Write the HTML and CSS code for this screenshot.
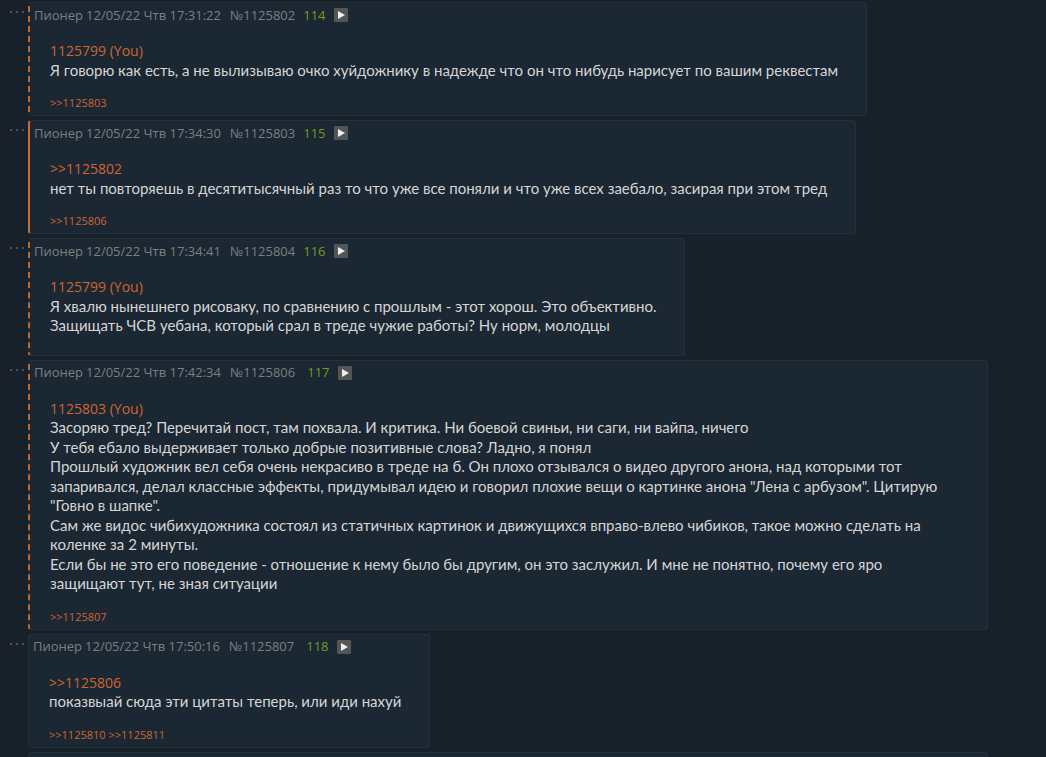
FILE: index.html
```
<!DOCTYPE html>
<html lang="ru">
  <head>
    <meta charset="UTF-8" />
    <meta name="viewport" content="width=device-width, initial-scale=1.0" />
    <title>Тред</title>
    <link rel="stylesheet" href="styles.css">
  </head>
  <body>
    <main class="thread">
      <div class="row">
        <button class="menu" aria-label="Меню поста"><svg viewBox="0 0 20 20"><path d="M2 9h2v2H2zM8 9h2v2H8zM14 9h2v2h-2z" /></svg></button>
        <article class="post reply-to-me">
          <header class="details">
            <span>Пионер</span>
            <time>12/05/22 Чтв 17:31:22</time>
            <a class="number" href="#1125802">№1125802</a>
            <span class="order">114</span>
            <button class="play" aria-label="Ответить"><svg viewBox="0 0 14 14"><path d="M4 3l7 4-7 4z" /></svg></button>
          </header>
          <div class="message">
            <a href="#1125799">1125799 (You)</a><br>
            Я говорю как есть, а не вылизываю очко хуйдожнику в надежде что он что нибудь нарисует по вашим реквестам
          </div>
          <footer class="refs"><a href="#1125803">&gt;&gt;1125803</a></footer>
        </article>
      </div>

      <div class="row">
        <button class="menu" aria-label="Меню поста"><svg viewBox="0 0 20 20"><path d="M2 9h2v2H2zM8 9h2v2H8zM14 9h2v2h-2z" /></svg></button>
        <article class="post mine" id="1125803">
          <header class="details">
            <span>Пионер</span>
            <time>12/05/22 Чтв 17:34:30</time>
            <a class="number" href="#1125803">№1125803</a>
            <span class="order">115</span>
            <button class="play" aria-label="Ответить"><svg viewBox="0 0 14 14"><path d="M4 3l7 4-7 4z" /></svg></button>
          </header>
          <div class="message">
            <a href="#1125802">&gt;&gt;1125802</a><br>
            нет ты повторяешь в десятитысячный раз то что уже все поняли и что уже всех заебало, засирая при этом тред
          </div>
          <footer class="refs"><a href="#1125806">&gt;&gt;1125806</a></footer>
        </article>
      </div>

      <div class="row">
        <button class="menu" aria-label="Меню поста"><svg viewBox="0 0 20 20"><path d="M2 9h2v2H2zM8 9h2v2H8zM14 9h2v2h-2z" /></svg></button>
        <article class="post reply-to-me">
          <header class="details">
            <span>Пионер</span>
            <time>12/05/22 Чтв 17:34:41</time>
            <a class="number" href="#1125804">№1125804</a>
            <span class="order">116</span>
            <button class="play" aria-label="Ответить"><svg viewBox="0 0 14 14"><path d="M4 3l7 4-7 4z" /></svg></button>
          </header>
          <div class="message">
            <a href="#1125799">1125799 (You)</a><br>
            Я хвалю нынешнего рисоваку, по сравнению с прошлым - этот хорош. Это объективно.<br>
            Защищать ЧСВ уебана, который срал в треде чужие работы? Ну норм, молодцы
          </div>
        </article>
      </div>

      <div class="row">
        <button class="menu" aria-label="Меню поста"><svg viewBox="0 0 20 20"><path d="M2 9h2v2H2zM8 9h2v2H8zM14 9h2v2h-2z" /></svg></button>
        <article class="post reply-to-me" id="1125806">
          <header class="details">
            <span>Пионер</span>
            <time>12/05/22 Чтв 17:42:34</time>
            <a class="number" href="#1125806">№1125806</a>
            <span class="order wide">117</span>
            <button class="play" aria-label="Ответить"><svg viewBox="0 0 14 14"><path d="M4 3l7 4-7 4z" /></svg></button>
          </header>
          <div class="message">
            <a href="#1125803">1125803 (You)</a><br>
            Засоряю тред? Перечитай пост, там похвала. И критика. Ни боевой свиньи, ни саги, ни вайпа, ничего<br>
            У тебя ебало выдерживает только добрые позитивные слова? Ладно, я понял<br>
            Прошлый художник вел себя очень некрасиво в треде на б. Он плохо отзывался о видео другого анона, над которыми тот запаривался, делал классные эффекты, придумывал идею и говорил плохие вещи о картинке анона "Лена с арбузом". Цитирую "Говно в шапке".<br>
            Сам же видос чибихудожника состоял из статичных картинок и движущихся вправо-влево чибиков, такое можно сделать на коленке за 2 минуты.<br>
            Если бы не это его поведение - отношение к нему было бы другим, он это заслужил. И мне не понятно, почему его яро защищают тут, не зная ситуации
          </div>
          <footer class="refs"><a href="#1125807">&gt;&gt;1125807</a></footer>
        </article>
      </div>

      <div class="row">
        <button class="menu" aria-label="Меню поста"><svg viewBox="0 0 20 20"><path d="M2 9h2v2H2zM8 9h2v2H8zM14 9h2v2h-2z" /></svg></button>
        <article class="post" id="1125807">
          <header class="details">
            <span>Пионер</span>
            <time>12/05/22 Чтв 17:50:16</time>
            <a class="number" href="#1125807">№1125807</a>
            <span class="order wide">118</span>
            <button class="play" aria-label="Ответить"><svg viewBox="0 0 14 14"><path d="M4 3l7 4-7 4z" /></svg></button>
          </header>
          <div class="message">
            <a href="#1125806">&gt;&gt;1125806</a><br>
            показвыай сюда эти цитаты теперь, или иди нахуй
          </div>
          <footer class="refs"><a href="#1125810">&gt;&gt;1125810</a> <a href="#1125811">&gt;&gt;1125811</a></footer>
        </article>
      </div>

      <div class="row">
        <span class="menu"></span>
        <article class="post next"></article>
      </div>
    </main>
  </body>
</html>
```
FILE: styles.css
```
* {
  box-sizing: border-box;
}

body {
  margin: 0;
  height: 100vh;
  overflow: hidden;
  background-color: #18212a;
  color: #d5d5d5;
  font-family: "Open Sans", sans-serif;
  font-size: 15px;
  line-height: 1.3;
}

a {
  color: #cc6630;
  text-decoration: none;
}

a:hover {
  color: #e88a50;
}

button {
  border: none;
  padding: 0;
  cursor: pointer;
}

.thread {
  display: flex;
  flex-direction: column;
  gap: 4px;
  padding: 2px 58px 0 8px;
}

.row {
  display: flex;
  align-items: flex-start;
}

.menu {
  flex: none;
  width: 20px;
  background: none;
}

.menu svg {
  display: block;
  fill: #4c5358;
}

.post {
  min-width: 0;
  padding: 2px 28px 4px 4px;
  background-color: #1b2733;
  border: 1px solid #24303a;
  border-radius: 3px;
}

.reply-to-me {
  border-left: 2px dashed #bf6526;
}

.mine {
  border-left: 2px solid #cc6a28;
}

.details {
  display: flex;
  align-items: center;
  height: 20px;
  color: #7c7f80;
  font-size: 13px;
}

.details time {
  margin: 0 9px 0 3px;
}

.number {
  color: inherit;
}

.order {
  margin: 0 8px 0 8px;
  color: #789922;
}

.wide {
  margin-left: 12px;
}

.play {
  width: 14px;
  height: 14px;
  border-radius: 1px;
  background-color: #555;
}

.play svg {
  display: block;
  fill: #eee;
}

.message {
  margin: 16px 0 15px 16px;
  font-family: Lato, "Open Sans", sans-serif;
}

.message a {
  font-family: "Open Sans", sans-serif;
  font-size: 14px;
}

.refs {
  margin-left: 16px;
  font-size: 11px;
  line-height: 16px;
}

.next {
  flex: 1;
  height: 40px;
}
```
